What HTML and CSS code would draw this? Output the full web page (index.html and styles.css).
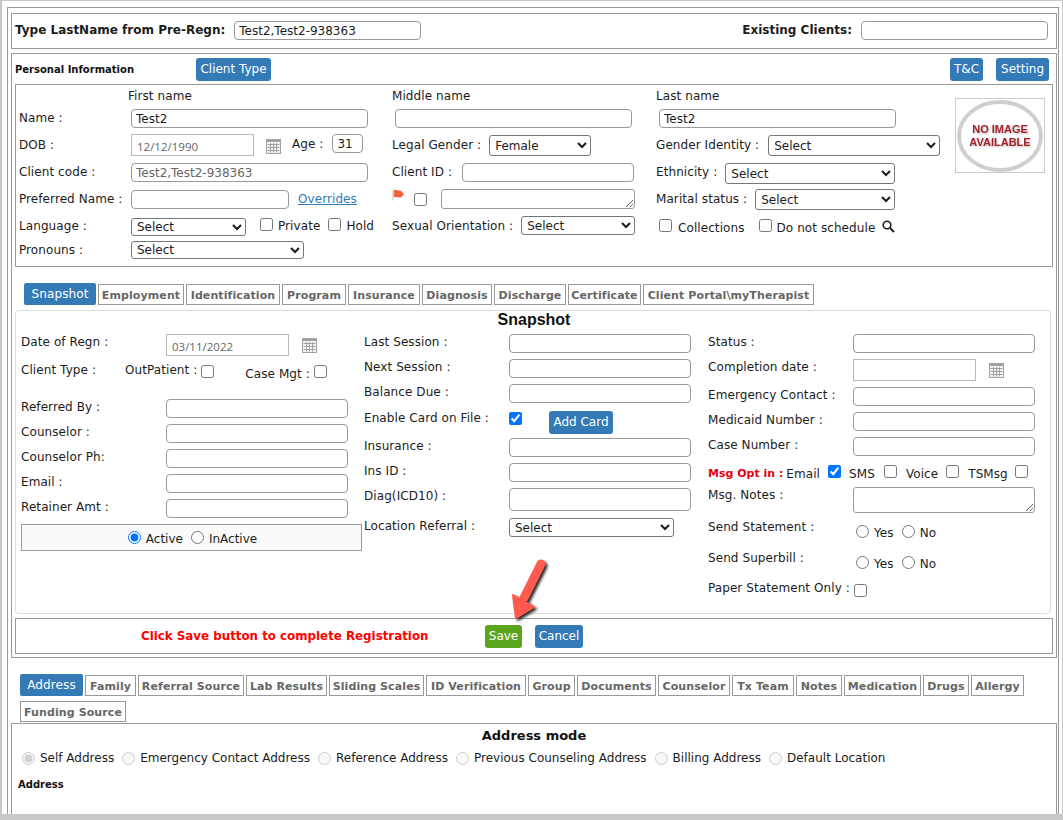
FILE: index.html
```html
<!DOCTYPE html>
<html lang="en">
<head>
<meta charset="utf-8">
<title>Client Registration</title>
<link rel="stylesheet" href="styles.css">
</head>
<body>
<svg class="sprite" width="0" height="0" aria-hidden="true">
  <symbol id="cal" viewBox="0 0 15 15">
    <rect x="0.5" y="0.5" width="14" height="14" fill="#f4f4f4" stroke="#a3a3a3"/>
    <rect x="1" y="1" width="13" height="2" fill="#a0a0a0"/>
    <path d="M1.5 5.5h12M1.5 8.5h12M1.5 11.5h12M4.5 4v9.5M7.5 4v9.5M10.5 4v9.5" stroke="#a3a3a3" stroke-width="1" fill="none"/>
  </symbol>
</svg>
<div class="page">
  <div class="frame">
    <section class="panel top-panel">
      <label class="strong">Type LastName from Pre-Regn:</label>
      <input class="txt w187 ml9" value="Test2,Test2-938363">
      <label class="strong push">Existing Clients:</label>
      <input class="txt w187 ml9 mr8">
    </section>

    <section class="panel main-panel">
      <div class="head-row">
        <span class="mini-title">Personal Information</span>
        <button class="btn blue client-type">Client Type</button>
        <button class="btn blue push tc">T&amp;C</button>
        <button class="btn blue ml13 mr4">Setting</button>
      </div>

      <div class="personal">
        <div class="col c1">
          <div class="row h24"><span class="sub sub1">First name</span></div>
          <div class="row h25"><span class="lbl w112">Name :</span><input class="txt w237" value="Test2"></div>
          <div class="row h29"><span class="lbl mt4 w112">DOB :</span><input class="date w123" value="12/12/1990"><svg class="cal-icon ml12 mt5"><use href="#cal"/></svg><span class="lbl ml11 mt3">Age :</span><input class="txt w31 ml9" value="31"></div>
          <div class="row h27"><span class="lbl w112">Client code :</span><input class="txt w237 ro" value="Test2,Test2-938363"></div>
          <div class="row h28"><span class="lbl w112">Preferred Name :</span><input class="txt w158"><a class="link" href="#">Overrides</a></div>
          <div class="row h23"><span class="lbl mt1 w112">Language :</span><select class="sel short w115"><option>Select</option></select><input type="checkbox" class="ck ml14"><span class="lbl mt1 ml5">Private</span><input type="checkbox" class="ck ml8"><span class="lbl mt1 ml5">Hold</span></div>
          <div class="row h23"><span class="lbl w112">Pronouns :</span><select class="sel short w173"><option>Select</option></select></div>
        </div>

        <div class="col c2">
          <div class="row h24"><span class="sub">Middle name</span></div>
          <div class="row h26"><input class="txt w237 ml3" ></div>
          <div class="row h28"><span class="lbl mt3">Legal Gender :</span><select class="sel tall w102 ml8"><option>Female</option></select></div>
          <div class="row h26"><span class="lbl">Client ID :</span><input class="txt w172 ml10"></div>
          <div class="row h27">
            <svg class="flag" viewBox="0 0 12 11" aria-hidden="true"><path d="M1.4 0c3-.6 5 1 7.6 .8L12 4.2 8.8 7.4C6 8 4 6.4 1.4 7.2z" fill="#f0613a"/><path d="M1 .5v10" stroke="#e2d6d2" stroke-width="1.6"/></svg>
            <input type="checkbox" class="ck ml10 mt4"><textarea class="area w194 ml14"></textarea>
          </div>
          <div class="row h23"><span class="lbl mt3">Sexual Orientation :</span><select class="sel w114 ml8"><option>Select</option></select></div>
        </div>

        <div class="col c3">
          <div class="row h24"><span class="sub">Last name</span></div>
          <div class="row h26"><input class="txt w237 ml3" value="Test2"></div>
          <div class="row h28"><span class="lbl mt3">Gender Identity :</span><select class="sel tall w172 ml9"><option>Select</option></select></div>
          <div class="row h26"><span class="lbl">Ethnicity :</span><select class="sel tall w170 ml8"><option>Select</option></select></div>
          <div class="row h29"><span class="lbl mt3">Marital status :</span><select class="sel tall w140 ml8"><option>Select</option></select></div>
          <div class="row h23">
            <input type="checkbox" class="ck ml3 mt1"><span class="lbl ml6 mt3">Collections</span>
            <input type="checkbox" class="ck ml14 mt1"><span class="lbl ml5 mt3">Do not schedule</span>
            <svg class="search" viewBox="0 0 13 13" aria-hidden="true"><circle cx="5" cy="5" r="3.8" fill="none" stroke="#1c1c1c" stroke-width="1.6"/><path d="M8 8l4 4" stroke="#1c1c1c" stroke-width="2"/></svg>
          </div>
        </div>

        <div class="no-image">
          <svg viewBox="0 0 88 73" width="88" height="73" aria-label="No image available">
            <ellipse class="ring" cx="44" cy="37" rx="41" ry="34"/>
            <text x="44" y="34" class="ni">NO IMAGE</text>
            <text x="44" y="47" class="ni">AVAILABLE</text>
          </svg>
        </div>
      </div>

      <nav class="tabs tabs-a">
        <a class="tab active">Snapshot</a><a class="tab">Employment</a><a class="tab">Identification</a><a class="tab">Program</a><a class="tab">Insurance</a><a class="tab">Diagnosis</a><a class="tab">Discharge</a><a class="tab">Certificate</a><a class="tab">Client Portal\myTherapist</a>
      </nav>

      <div class="snapshot">
        <h2 class="snap-title">Snapshot</h2>
        <div class="snap-cols">
          <div class="col s1">
            <div class="row h28"><span class="lbl0 w145">Date of Regn :</span><input class="date w123" value="03/11/2022"><svg class="cal-icon ml13 mt4"><use href="#cal"/></svg></div>
            <div class="row h37"><span class="lbl0 w104">Client Type :</span><span class="lbl0">OutPatient :</span><input type="checkbox" class="ck ml4 mt3"><span class="lbl0 ml31 mt4">Case Mgt :</span><input type="checkbox" class="ck ml4 mt3"></div>
            <div class="row h25"><span class="lbl0 w145">Referred By :</span><input class="txt w182"></div>
            <div class="row h25"><span class="lbl0 w145">Counselor :</span><input class="txt w182"></div>
            <div class="row h25"><span class="lbl0 w145">Counselor Ph:</span><input class="txt w182"></div>
            <div class="row h25"><span class="lbl0 w145">Email :</span><input class="txt w182"></div>
            <div class="row h25"><span class="lbl0 w145">Retainer Amt :</span><input class="txt w182"></div>
            <div class="status-box">
              <input type="radio" name="st" class="rd" checked><span class="ml5 mt3">Active</span>
              <input type="radio" name="st" class="rd ml8"><span class="ml5 mt3">InActive</span>
            </div>
          </div>

          <div class="col s2">
            <div class="row h25"><span class="lbl0 w145">Last Session :</span><input class="txt w182"></div>
            <div class="row h25"><span class="lbl0 w145">Next Session :</span><input class="txt w182"></div>
            <div class="row h25"><span class="lbl0 w145">Balance Due :</span><input class="txt w182"></div>
            <div class="row h29"><span class="lbl0 w145 mt1">Enable Card on File :</span><input type="checkbox" class="ck mt3" checked><button class="btn blue add-card">Add Card</button></div>
            <div class="row h25"><span class="lbl0 w145">Insurance :</span><input class="txt w182"></div>
            <div class="row h25"><span class="lbl0 w145">Ins ID :</span><input class="txt w182"></div>
            <div class="row h30"><span class="lbl0 w145">Diag(ICD10) :</span><input class="txt w182 h23i"></div>
            <div class="row"><span class="lbl0 w145">Location Referral :</span><select class="sel w165"><option>Select</option></select></div>
          </div>

          <div class="col s3">
            <div class="row h25"><span class="lbl0 w145">Status :</span><input class="txt w182"></div>
            <div class="row h28"><span class="lbl0 w145">Completion date :</span><input class="date w123"><svg class="cal-icon ml13 mt4"><use href="#cal"/></svg></div>
            <div class="row h25"><span class="lbl0 w145">Emergency Contact :</span><input class="txt w182"></div>
            <div class="row h25"><span class="lbl0 w145">Medicaid Number :</span><input class="txt w182"></div>
            <div class="row h28"><span class="lbl0 w145">Case Number :</span><input class="txt w182"></div>
            <div class="row h22"><span class="red-s mt1">Msg Opt in :</span><span class="lbl0 ml3 mt1">Email</span><input type="checkbox" class="ck ml8" checked><span class="lbl0 ml8 mt1">SMS</span><input type="checkbox" class="ck ml9"><span class="lbl0 ml9 mt1">Voice</span><input type="checkbox" class="ck ml8"><span class="lbl0 ml9 mt1">TSMsg</span><input type="checkbox" class="ck ml7"></div>
            <div class="row h32"><span class="lbl0 w145">Msg. Notes :</span><textarea class="area w182 h26i"></textarea></div>
            <div class="row h31"><span class="lbl0 w148">Send Statement :</span><input type="radio" class="rd mt6" name="a"><span class="lbl0 ml5 mt6">Yes</span><input type="radio" class="rd ml8 mt6" name="a"><span class="lbl0 ml5 mt6">No</span></div>
            <div class="row h30"><span class="lbl0 w148">Send Superbill :</span><input type="radio" class="rd mt6" name="b"><span class="lbl0 ml5 mt6">Yes</span><input type="radio" class="rd ml8 mt6" name="b"><span class="lbl0 ml5 mt6">No</span></div>
            <div class="row"><span class="lbl0">Paper Statement Only :</span><input type="checkbox" class="ck ml4 mt4"></div>
          </div>
        </div>
      </div>

      <div class="save-box">
        <span class="save-msg">Click Save button to complete Registration</span>
        <button class="btn green save">Save</button>
        <button class="btn blue cancel">Cancel</button>
      </div>
    </section>

    <nav class="tabs tabs-b">
      <a class="tab active">Address</a><a class="tab">Family</a><a class="tab">Referral Source</a><a class="tab">Lab Results</a><a class="tab">Sliding Scales</a><a class="tab">ID Verification</a><a class="tab">Group</a><a class="tab">Documents</a><a class="tab">Counselor</a><a class="tab">Tx Team</a><a class="tab">Notes</a><a class="tab">Medication</a><a class="tab">Drugs</a><a class="tab">Allergy</a><a class="tab funding">Funding Source</a>
    </nav>

    <section class="address">
      <h3 class="addr-title">Address mode</h3>
      <div class="addr-modes">
        <input type="radio" class="rd" name="m" disabled checked><span>Self Address</span>
        <input type="radio" class="rd" name="m" disabled><span>Emergency Contact Address</span>
        <input type="radio" class="rd" name="m" disabled><span>Reference Address</span>
        <input type="radio" class="rd" name="m" disabled><span>Previous Counseling Address</span>
        <input type="radio" class="rd" name="m" disabled><span>Billing Address</span>
        <input type="radio" class="rd" name="m" disabled><span>Default Location</span>
      </div>
      <div class="mini-title addr-sub">Address</div>
    </section>
  </div>

  <svg class="arrow" viewBox="0 0 50 66" width="50" height="66" aria-hidden="true">
    <path d="M39 6L22 40" stroke="#ff5a4f" stroke-width="9" stroke-linecap="round" fill="none"/>
    <path d="M11 37L14 60 32 49z" fill="#ff5a4f" stroke="#ff5a4f" stroke-width="2" stroke-linejoin="round"/>
  </svg>
</div>
</body>
</html>
```

FILE: styles.css
```css
* { box-sizing: border-box; }
html, body { margin: 0; padding: 0; background: #fff; }
body { font: 12px/15px "DejaVu Sans", Verdana, sans-serif; color: #1c1c1c; }
.sprite { position: absolute; }

.page {
  position: relative;
  width: 1063px;
  height: 820px;
  overflow: hidden;
  border-style: solid;
  border-color: #c8c8c8;
  border-width: 1px 1px 6px 2px;
  padding: 6px 3px 0 5px;
}
.frame {
  height: 807px;
  border: 1px solid #999;
  border-bottom: 0;
  padding: 0 1px 0 3px;
  display: flex;
  flex-direction: column;
}
.panel { border: 1px solid #999; }
.top-panel {
  margin-top: 5px;
  height: 36px;
  display: flex;
  align-items: center;
  padding: 0 0 1px 3px;
  flex: none;
}
.strong { font-weight: 700; font-size: 12px; }
.push { margin-left: auto; }

.main-panel { margin-top: 4px; padding: 0 3px; flex: none; height: 605px; }
.head-row { height: 30px; display: flex; align-items: center; }
.mini-title { font-weight: 700; font-size: 10px; color: #111; }

.btn {
  border: 0;
  border-radius: 3px;
  height: 23px;
  padding: 0 5px;
  font: 12px/15px "DejaVu Sans", Verdana, sans-serif;
  color: #fff;
  white-space: nowrap;
}
.btn.client-type { margin-left: 62px; width: 75px; padding: 0; }
.btn.tc { width: 33px; padding: 0; }
.blue { background: #337ab7; }
.green { background: #5ba51c; }

.personal {
  height: 183px;
  border: 1px solid #999;
  padding-left: 3px;
  display: flex;
}
.col { display: flex; flex-direction: column; flex: none; }
.c1 { width: 373px; }
.c2 { width: 264px; }
.c3 { width: 299px; }
.row { display: flex; align-items: flex-start; flex: none; }
.sub { line-height: 22px; letter-spacing: .08px; }
.sub1 { margin-left: 109px; }

.lbl { margin-top: 2px; line-height: 15px; letter-spacing: .08px; white-space: nowrap; }
.lbl0 { padding-top: 1px; line-height: 15px; letter-spacing: .08px; white-space: nowrap; }
.txt {
  height: 19px;
  border: 1px solid #999;
  border-radius: 4px;
  padding: 0 4px;
  font: 12px/15px "DejaVu Sans", Verdana, sans-serif;
  color: #1c1c1c;
  background: #fff;
  outline: 0;
}
.ro { color: #666; }
.date {
  height: 22px;
  border: 1px solid #bbb;
  padding: 2px 5px 0;
  font: 11.5px/15px "Open Sans", "DejaVu Sans", sans-serif;
  color: #666;
  background: #fff;
}
.sel {
  height: 19px;
  font: 12px "DejaVu Sans", Verdana, sans-serif;
  color: #1c1c1c;
  background-color: #fff;
  padding: 0 0 0 1px;
  border-radius: 3px;
}
.tall { height: 21px; }
.short { height: 18px; }
.area {
  height: 20px;
  border: 1px solid #999;
  border-radius: 3px;
  padding: 0;
  margin: 0;
  background: #fff;
}
.ck, .rd { margin: 0; flex: none; }
.ck { width: 13px; height: 13px; }
.rd { width: 13px; height: 13px; }
.cal-icon { width: 15px; height: 15px; flex: none; }
.flag { width: 12px; height: 11px; margin-top: 1px; flex: none; }
.search { width: 13px; height: 13px; margin: 2px 0 0 7px; flex: none; }
.link { margin: 2px 0 0 9px; color: #337ab7; text-decoration: underline; letter-spacing: .08px; }

.no-image {
  width: 90px;
  height: 75px;
  margin-top: 13px;
  border: 1px solid #ccc;
  flex: none;
  display: flex;
}
.ring { fill: #fff; stroke: #cfcfcf; stroke-width: 4; }
.ni {
  font: 700 11px "Liberation Sans", Arial, sans-serif;
  fill: #a3222b;
  text-anchor: middle;
  filter: drop-shadow(1px 1px 1px #bbb);
}

.tabs { display: grid; column-gap: 2px; row-gap: 5px; align-items: end; justify-items: stretch; }
.tabs-a {
  margin-top: 16px;
  padding-left: 9px;
  height: 22px;
  grid-template-columns: 72px 86px 94px 64px 72px 70px 72px 73px 171px;
}
.tabs-b {
  margin-top: 16px;
  padding-left: 9px;
  flex: none;
  grid-template-columns: 63px 51px 106px 81px 95px 100px 47px 79px 72px 62px 46px 77px 46px 53px;
}
.tab {
  height: 21px;
  border: 1px solid #999;
  font: 700 11px/21px "DejaVu Sans", Verdana, sans-serif;
  letter-spacing: .1px;
  text-align: center;
  color: #666;
  white-space: nowrap;
}
.tab.funding { width: 106px; }
.tab.active {
  height: 22px;
  border: 0;
  border-radius: 2px;
  background: #337ab7;
  color: #fff;
  font: 12px/23px "DejaVu Sans", Verdana, sans-serif;
}

.snapshot {
  margin-top: 5px;
  height: 304px;
  width: 1036px;
  border: 1px solid #ddd;
  border-radius: 4px;
  padding-left: 5px;
}
.snap-title {
  margin: 0;
  padding-right: 3px;
  height: 23px;
  text-align: center;
  font: 700 16px/17px "Liberation Sans", Arial, sans-serif;
  color: #111;
}
.snap-cols { display: flex; }
.s1 { width: 343px; }
.s2 { width: 344px; }
.s3 { width: 340px; }
.status-box {
  width: 341px;
  height: 27px;
  padding-left: 2px;
  border: 1px solid #999;
  background: #fafafa;
  display: flex;
  align-items: center;
  justify-content: center;
}
.add-card { margin: 2px 0 0 27px; width: 64px; padding: 0; }
.red-s { color: #e8000f; font-weight: 700; font-size: 11px; line-height: 15px; white-space: nowrap; }

.save-box {
  margin-top: 4px;
  height: 36px;
  border: 1px solid #999;
  display: flex;
  align-items: center;
}
.save-msg { margin-left: 125px; width: 344px; color: #f00; font-weight: 700; font-size: 11.85px; }
.save { width: 37px; padding: 0; }
.cancel { margin-left: 13px; width: 48px; padding: 0; }

.address { flex: 1; margin-top: 1px; border: 1px solid #999; border-bottom: 0; }
.addr-title { margin: 0; height: 22px; text-align: center; font: 700 13px/24px "DejaVu Sans", Verdana, sans-serif; color: #111; }
.addr-modes { display: flex; align-items: center; margin-top: 4px; padding-left: 10px; height: 16px; }
.addr-modes span { margin: 0 8px 0 5px; white-space: nowrap; }
.addr-sub { margin: 11px 0 0 6px; }

.arrow {
  position: absolute;
  left: 500px;
  top: 557px;
  filter: drop-shadow(2px 2px 1.5px #222);
}

.h22 { height: 22px; } .h23 { height: 23px; } .h24 { height: 24px; } .h25 { height: 25px; }
.h26 { height: 26px; } .h27 { height: 27px; } .h28 { height: 28px; } .h29 { height: 29px; }
.h30 { height: 30px; } .h31 { height: 31px; } .h32 { height: 32px; } .h37 { height: 37px; }
.h23i { height: 23px; } .h26i { height: 26px; }

.w31 { width: 31px; flex: none; } .w102 { width: 102px; flex: none; } .w104 { width: 104px; flex: none; }
.w112 { width: 112px; flex: none; } .w114 { width: 114px; flex: none; } .w115 { width: 115px; flex: none; }
.w123 { width: 123px; flex: none; } .w140 { width: 140px; flex: none; } .w145 { width: 145px; flex: none; }
.w148 { width: 148px; flex: none; } .w158 { width: 158px; flex: none; } .w165 { width: 165px; flex: none; }
.w170 { width: 170px; flex: none; } .w172 { width: 172px; flex: none; } .w173 { width: 173px; flex: none; }
.w182 { width: 182px; flex: none; } .w187 { width: 187px; flex: none; } .w194 { width: 194px; flex: none; }
.w237 { width: 237px; flex: none; }

.ml3 { margin-left: 3px; } .ml4 { margin-left: 4px; } .ml5 { margin-left: 5px; } .ml6 { margin-left: 6px; }
.ml7 { margin-left: 7px; } .ml8 { margin-left: 8px; } .ml9 { margin-left: 9px; } .ml10 { margin-left: 10px; }
.ml11 { margin-left: 11px; } .ml12 { margin-left: 12px; } .ml13 { margin-left: 13px; } .ml14 { margin-left: 14px; }
.ml31 { margin-left: 31px; }
.mr4 { margin-right: 4px; } .mr8 { margin-right: 8px; }
.mt1 { margin-top: 1px; } .mt2 { margin-top: 2px; } .mt3 { margin-top: 3px; } .mt4 { margin-top: 4px; }
.mt5 { margin-top: 5px; } .mt6 { margin-top: 6px; }
```
